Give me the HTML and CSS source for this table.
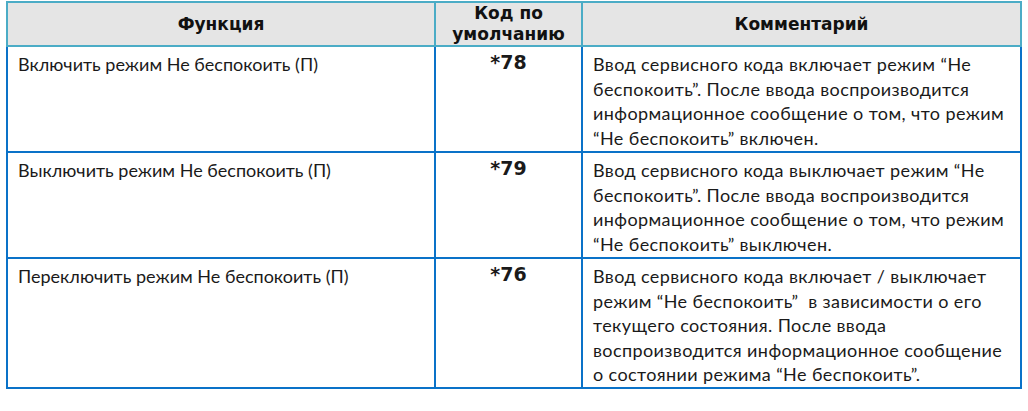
FILE: index.html
```html
<!DOCTYPE html>
<html lang="ru">
<head>
<meta charset="utf-8">
<link rel="stylesheet" href="styles.css">
</head>
<body>
<table class="codes">
  <colgroup>
    <col class="c-func">
    <col class="c-code">
    <col class="c-note">
  </colgroup>
  <thead>
    <tr>
      <th>Функция</th>
      <th>Код по<br>умолчанию</th>
      <th>Комментарий</th>
    </tr>
  </thead>
  <tbody>
    <tr class="r4">
      <td class="func">Включить режим Не беспокоить (П)</td>
      <td class="code">*78</td>
      <td class="note">Ввод сервисного кода включает режим “Не<br>беспокоить”. После ввода воспроизводится<br>информационное сообщение о том, что режим<br>“Не беспокоить” включен.</td>
    </tr>
    <tr class="r4">
      <td class="func">Выключить режим Не беспокоить (П)</td>
      <td class="code">*79</td>
      <td class="note">Ввод сервисного кода выключает режим “Не<br>беспокоить”. После ввода воспроизводится<br>информационное сообщение о том, что режим<br>“Не беспокоить” выключен.</td>
    </tr>
    <tr class="r5">
      <td class="func">Переключить режим Не беспокоить (П)</td>
      <td class="code">*76</td>
      <td class="note">Ввод сервисного кода включает / выключает<br>режим “Не беспокоить” &nbsp;в зависимости о его<br>текущего состояния. После ввода<br>воспроизводится информационное сообщение<br>о состоянии режима “Не беспокоить”.</td>
    </tr>
  </tbody>
</table>
</body>
</html>
```
FILE: styles.css
```css
html, body {
  margin: 0;
  padding: 0;
  background: #ffffff;
}
body {
  padding: 1px 0 0 6px;
}
.codes {
  border-collapse: collapse;
  table-layout: fixed;
  width: 1014px;
  font-family: "Lato", "Open Sans", sans-serif;
  color: #1a1a1a;
}
.c-func { width: 428px; }
.c-code { width: 147px; }
.c-note { width: 439px; }

.codes th {
  background: #e5e5e5;
  border: 2px solid #4bacc6;
  height: 41px;
  padding: 0;
  font-family: "DejaVu Sans", Verdana, sans-serif;
  font-weight: bold;
  font-size: 17px;
  line-height: 21px;
  text-align: center;
  vertical-align: middle;
  color: #111;
}
.codes td {
  border: 2px solid #0a72c8;
  vertical-align: top;
  padding: 5px 10px 0 10px;
  font-size: 18px;
  line-height: 24.5px;
}
.codes td.note {
  letter-spacing: 0.4px;
}
.r4 td { height: 99px; }
.r5 td { height: 122px; }
.codes td.code {
  text-align: center;
  font-family: "DejaVu Sans", Verdana, sans-serif;
  font-weight: bold;
  font-size: 19px;
  line-height: 24px;
  padding-top: 3px;
}
```
